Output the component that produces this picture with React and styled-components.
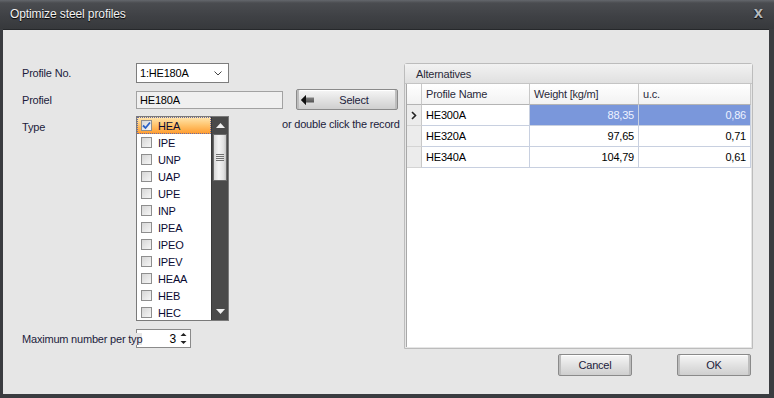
import React from "react";
import styled, { createGlobalStyle } from "styled-components";

const Global = createGlobalStyle`
  html, body { margin: 0; padding: 0; background: #3a3c40; }
  body { font-family: "Liberation Sans", Arial, sans-serif; font-size: 11px; letter-spacing: -0.2px; }
  * { box-sizing: border-box; }
`;

const Window = styled.div`
  width: 774px;
  height: 398px;
  display: flex;
  flex-direction: column;
  background: #3a3c40;
`;

const TitleBar = styled.div`
  height: 29px;
  flex: none;
  display: flex;
  align-items: center;
  justify-content: space-between;
  padding: 0 11px 2px 10px;
  background: linear-gradient(#64676c 0, #4a4c50 3px, #3e4044 60%, #37393c 100%);
  color: #f2f2f2;
  font-size: 12px;
  letter-spacing: -0.1px;
  text-shadow: 0 1px 1px #000;
`;

const Close = styled.span`
  color: #b4b8bc;
  font-weight: bold;
  font-size: 12px;
  font-family: "DejaVu Sans", sans-serif;
`;

const Body = styled.div`
  flex: 1;
  margin: 0 5px 4px 3px;
  background: #e6e6e6;
  border-top: 1px solid #26282b;
  padding: 33px 16px 0 19px;
  display: flex;
  flex-direction: column;
`;

const Main = styled.div`
  display: flex;
`;

const Form = styled.div`
  width: 382px;
  display: flex;
  flex-direction: column;
`;

const Row = styled.div`
  display: flex;
  align-items: ${(p) => p.$align || "center"};
  margin-top: ${(p) => p.$gap || 0}px;
`;

const Label = styled.div`
  width: 114px;
  flex: none;
  color: #1c1c3c;
  white-space: nowrap;
  padding-top: ${(p) => p.$top || 0}px;
  position: relative;
  z-index: 1;
  span { background: #e6e6e6; }
`;

const Combo = styled.div`
  width: 93px;
  height: 20px;
  border: 1px solid #7d7d7d;
  background: #fff;
  display: flex;
  align-items: center;
  justify-content: space-between;
  padding: 0 6px 0 3px;
  color: #000;
`;

const TextBox = styled.div`
  width: 147px;
  height: 18px;
  border: 1px solid #a2a2a2;
  background: #f0f0f0;
  display: flex;
  align-items: center;
  padding-left: 3px;
  color: #000;
`;

const Button = styled.button`
  width: ${(p) => p.$w || 74}px;
  height: ${(p) => p.$h || 22}px;
  margin-left: ${(p) => p.$ml || 0}px;
  border: 1px solid #8a8a8a;
  border-radius: 2px;
  background: linear-gradient(#f6f6f6, #e2e2e2 50%, #cfcfcf);
  box-shadow: inset 2px 0 0 #bdbdbd, inset -2px 0 0 #bdbdbd, inset 0 1px 0 #fff;
  font-family: "Liberation Sans", Arial, sans-serif;
  font-size: 11px;
  letter-spacing: -0.2px;
  color: #1c1c3c;
  display: flex;
  align-items: center;
  justify-content: center;
  padding: 0 4px;
  position: relative;
`;

const ButtonIcon = styled.svg`
  position: absolute;
  left: 4px;
  top: 5px;
`;

const ListWrap = styled.div`
  width: 93px;
  height: 205px;
  border: 1px solid #7a7a7a;
  background: #fff;
  display: flex;
  flex: none;
`;

const Items = styled.div`
  flex: 1;
`;

const Item = styled.div`
  height: 17px;
  display: flex;
  align-items: center;
  padding-left: 4px;
  color: #0a0a32;
  background: ${(p) => (p.$sel ? "linear-gradient(#ffe7b0, #ffc26a 50%, #ff9a2c)" : "transparent")};
  outline: ${(p) => (p.$sel ? "1px dotted #6a6aa0" : "none")};
  outline-offset: -1px;
`;

const Check = styled.span`
  width: 11px;
  height: 11px;
  border: 1px solid #8e8e8e;
  background: linear-gradient(135deg, #d6d6d6, #f6f6f6);
  margin-right: 6px;
  display: flex;
  align-items: center;
  justify-content: center;
  flex: none;
`;

const ScrollBar = styled.div`
  width: 17px;
  background: #4a4a4a;
  border-left: 1px solid #3a3a3a;
  display: flex;
  flex-direction: column;
`;

const ScrollBtn = styled.div`
  height: 17px;
  display: flex;
  align-items: center;
  justify-content: center;
  flex: none;
`;

const Thumb = styled.div`
  height: 47px;
  margin: 0 1px;
  border: 1px solid #6a6a6a;
  background: linear-gradient(90deg, #d8d8d8, #f4f4f4 40%, #e0e0e0 80%, #c4c4c4);
  display: flex;
  flex-direction: column;
  align-items: center;
  justify-content: center;
  gap: 1px;
  i { width: 8px; height: 1px; background: #707070; display: block; }
`;

const Track = styled.div`
  flex: 1;
`;

const Hint = styled.div`
  margin-left: 53px;
  margin-top: 2px;
  color: #1c1c3c;
  white-space: nowrap;
`;

const Spin = styled.div`
  width: 55px;
  height: 19px;
  border: 1px solid #8a8a8a;
  background: #fff;
  display: flex;
  align-items: center;
  justify-content: flex-end;
  padding-right: 3px;
  gap: 4px;
  color: #000;
  font-size: 12px;
`;

const Group = styled.div`
  width: 349px;
  height: 286px;
  border: 1px solid #bcbcbc;
  border-radius: 3px 3px 0 0;
  background: #e6e6e6;
  display: flex;
  flex-direction: column;
`;

const GroupHead = styled.div`
  height: 20px;
  background: linear-gradient(#f2f2f2, #e0e0e0);
  border-bottom: 1px solid #c4c4c4;
  color: #2a2a3a;
  padding-left: 11px;
  display: flex;
  align-items: center;
`;

const Grid = styled.div`
  flex: 1;
  margin: 0 1px 1px 1px;
  background: #fff;
  border-left: 1px solid #a8a8a8;
  display: grid;
  grid-template-columns: 15px 108px 109px 112px;
  grid-auto-rows: 21px;
  align-content: start;
`;

const HeadCell = styled.div`
  background: linear-gradient(#ffffff, #f2f2f2);
  border-right: 1px solid #c8c8c8;
  border-bottom: 1px solid #b4b4b4;
  color: #2a2a3a;
  padding-left: 4px;
  display: flex;
  align-items: center;
`;

const Indicator = styled.div`
  background: #ececec;
  border-right: 1px solid #c8c8c8;
  border-bottom: 1px solid #d4d4d4;
  display: flex;
  align-items: center;
  justify-content: center;
`;

const Cell = styled.div`
  border-right: 1px solid #c8d0e0;
  border-bottom: 1px solid #c8d0e0;
  background: ${(p) => (p.$sel ? "#7a97db" : "#fff")};
  color: ${(p) => (p.$sel ? "#eef2ff" : "#000")};
  display: flex;
  align-items: center;
  justify-content: ${(p) => (p.$num ? "flex-end" : "flex-start")};
  padding: 0 4px;
`;

const Footer = styled.div`
  display: flex;
  justify-content: flex-end;
  gap: 45px;
  margin-top: 5px;
  padding-right: 2px;
`;

const types = ["HEA", "IPE", "UNP", "UAP", "UPE", "INP", "IPEA", "IPEO", "IPEV", "HEAA", "HEB", "HEC"];

const rows = [
  { name: "HE300A", w: "88,35", uc: "0,86", sel: true },
  { name: "HE320A", w: "97,65", uc: "0,71" },
  { name: "HE340A", w: "104,79", uc: "0,61" },
];

const App = () => {
  return (
    <>
      <Global />
      <Window>
        <TitleBar>
          <span>Optimize steel profiles</span>
          <Close>X</Close>
        </TitleBar>
        <Body>
          <Main>
            <Form>
              <Row>
                <Label>Profile No.</Label>
                <Combo>
                  <span>1:HE180A</span>
                  <svg width="8" height="5" viewBox="0 0 8 5">
                    <path d="M0.5 0.5 L4 4 L7.5 0.5" fill="none" stroke="#444" strokeWidth="1" />
                  </svg>
                </Combo>
              </Row>
              <Row $gap={6}>
                <Label>Profiel</Label>
                <TextBox>HE180A</TextBox>
                <Button $w={102} $h={21} $ml={13}>
                  <ButtonIcon width="14" height="10" viewBox="0 0 14 10">
                    <defs>
                      <linearGradient id="ar" x1="0" y1="0" x2="0" y2="1">
                        <stop offset="0" stopColor="#9a9a9a" />
                        <stop offset="1" stopColor="#3a3a3a" />
                      </linearGradient>
                    </defs>
                    <path d="M0 5 L5 0 L5 2.5 L13 2.5 L13 7.5 L5 7.5 L5 10 Z" fill="url(#ar)" />
                    <path d="M0 5 L5 0 L5 10 Z" fill="#111" />
                  </ButtonIcon>
                  <span style={{ marginLeft: 14 }}>Select</span>
                </Button>
              </Row>
              <Row $gap={6} $align="flex-start">
                <Label $top={5}>Type</Label>
                <ListWrap>
                  <Items>
                    {types.map((t, i) => (
                      <Item key={t} $sel={i === 0}>
                        <Check>
                          {i === 0 && (
                            <svg width="9" height="9" viewBox="0 0 9 9">
                              <path d="M1 4.5 L3.5 7 L8 1.5" fill="none" stroke="#2a62c8" strokeWidth="1.8" />
                            </svg>
                          )}
                        </Check>
                        {t}
                      </Item>
                    ))}
                  </Items>
                  <ScrollBar>
                    <ScrollBtn>
                      <svg width="9" height="5" viewBox="0 0 9 5">
                        <path d="M0 5 L4.5 0 L9 5 Z" fill="#f0f0f0" />
                      </svg>
                    </ScrollBtn>
                    <Thumb>
                      <i />
                      <i />
                      <i />
                      <i />
                    </Thumb>
                    <Track />
                    <ScrollBtn>
                      <svg width="9" height="5" viewBox="0 0 9 5">
                        <path d="M0 0 L4.5 5 L9 0 Z" fill="#f0f0f0" />
                      </svg>
                    </ScrollBtn>
                  </ScrollBar>
                </ListWrap>
                <Hint>or double click the record</Hint>
              </Row>
              <Row $gap={8}>
                <Label>
                  <span>Maximum number per typ</span>
                </Label>
                <Spin>
                  <span>3</span>
                  <svg width="7" height="13" viewBox="0 0 7 13">
                    <path d="M0.5 4 L3.5 1 L6.5 4 Z" fill="#222" />
                    <path d="M0.5 9 L3.5 12 L6.5 9 Z" fill="#222" />
                  </svg>
                </Spin>
              </Row>
            </Form>
            <Group>
              <GroupHead>Alternatives</GroupHead>
              <Grid>
                <HeadCell />
                <HeadCell>Profile Name</HeadCell>
                <HeadCell>Weight [kg/m]</HeadCell>
                <HeadCell>u.c.</HeadCell>
                {rows.map((r) => (
                  <React.Fragment key={r.name}>
                    <Indicator>
                      {r.sel && (
                        <svg width="6" height="9" viewBox="0 0 6 9">
                          <path d="M1 1 L4.5 4.5 L1 8" fill="none" stroke="#222" strokeWidth="1.6" />
                        </svg>
                      )}
                    </Indicator>
                    <Cell>{r.name}</Cell>
                    <Cell $num $sel={r.sel}>{r.w}</Cell>
                    <Cell $num $sel={r.sel}>{r.uc}</Cell>
                  </React.Fragment>
                ))}
              </Grid>
            </Group>
          </Main>
          <Footer>
            <Button>Cancel</Button>
            <Button>OK</Button>
          </Footer>
        </Body>
      </Window>
    </>
  );
};

export default App;
